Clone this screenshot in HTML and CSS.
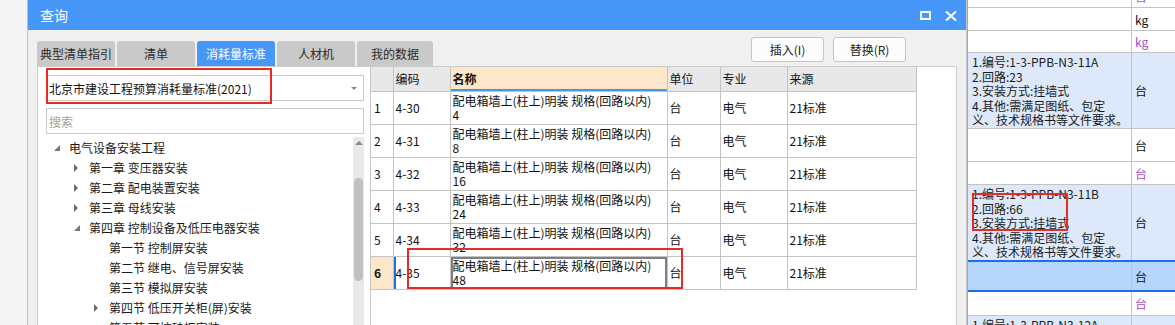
FILE: index.html
```html
<!DOCTYPE html>
<html lang="zh-CN">
<head>
<meta charset="utf-8">
<title>查询</title>
<link rel="stylesheet" href="styles.css">
</head>
<body>
<div class="screen">
  <div class="backdrop"></div>

  <div class="dialog">
    <div class="titlebar">
      <span class="title">查询</span>
      <div class="winbtns">
        <svg class="wbtn" width="11" height="9" viewBox="0 0 11 9"><rect x="1" y="1" width="9" height="7" fill="none" stroke="#fff" stroke-width="2"/></svg>
        <svg class="wbtn" width="12" height="10" viewBox="0 0 12 10"><path d="M1 0.5 L11 9.5 M11 0.5 L1 9.5" stroke="#fff" stroke-width="2" fill="none"/></svg>
      </div>
    </div>

    <div class="body">
      <div class="toolbar">
        <div class="tabs">
          <div class="tab">典型清单指引</div>
          <div class="tab">清单</div>
          <div class="tab active">消耗量标准</div>
          <div class="tab">人材机</div>
          <div class="tab narrow">我的数据</div>
        </div>
        <div class="actions">
          <div class="btn">插入(I)</div>
          <div class="btn">替换(R)</div>
        </div>
      </div>

      <div class="panel">
        <div class="leftpane">
          <div class="combo"><span>北京市建设工程预算消耗量标准(2021)</span><i class="caret"></i></div>
          <div class="search">搜索</div>
          <div class="treewrap">
            <div class="tree">
              <div class="node l0"><span class="tog"><i class="tri-open"></i></span>电气设备安装工程</div>
              <div class="node l1"><span class="tog"><i class="tri-closed"></i></span>第一章 变压器安装</div>
              <div class="node l1"><span class="tog"><i class="tri-closed"></i></span>第二章 配电装置安装</div>
              <div class="node l1"><span class="tog"><i class="tri-closed"></i></span>第三章 母线安装</div>
              <div class="node l1"><span class="tog"><i class="tri-open"></i></span>第四章 控制设备及低压电器安装</div>
              <div class="node l2"><span class="tog"></span>第一节 控制屏安装</div>
              <div class="node l2"><span class="tog"></span>第二节 继电、信号屏安装</div>
              <div class="node l2"><span class="tog"></span>第三节 模拟屏安装</div>
              <div class="node l2"><span class="tog"><i class="tri-closed"></i></span>第四节 低压开关柜(屏)安装</div>
              <div class="node l2"><span class="tog"></span>第五节 可控硅柜安装</div>
            </div>
            <div class="vscroll">
              <i class="up"></i>
              <div class="thumb"></div>
            </div>
          </div>
        </div>

        <div class="rightpane">
          <table class="grid-table">
            <colgroup>
              <col class="c-num"><col class="c-code"><col class="c-name"><col class="c-unit"><col class="c-major"><col class="c-src">
            </colgroup>
            <thead>
              <tr>
                <th></th><th>编码</th><th class="sorted">名称</th><th>单位</th><th>专业</th><th>来源</th>
              </tr>
            </thead>
            <tbody>
              <tr><td class="num">1</td><td>4-30</td><td class="name">配电箱墙上(柱上)明装 规格(回路以内)<br>4</td><td>台</td><td>电气</td><td>21标准</td></tr>
              <tr><td class="num">2</td><td>4-31</td><td class="name">配电箱墙上(柱上)明装 规格(回路以内)<br>8</td><td>台</td><td>电气</td><td>21标准</td></tr>
              <tr><td class="num">3</td><td>4-32</td><td class="name">配电箱墙上(柱上)明装 规格(回路以内)<br>16</td><td>台</td><td>电气</td><td>21标准</td></tr>
              <tr><td class="num">4</td><td>4-33</td><td class="name">配电箱墙上(柱上)明装 规格(回路以内)<br>24</td><td>台</td><td>电气</td><td>21标准</td></tr>
              <tr><td class="num">5</td><td>4-34</td><td class="name">配电箱墙上(柱上)明装 规格(回路以内)<br>32</td><td>台</td><td>电气</td><td>21标准</td></tr>
              <tr class="current"><td class="num">6</td><td class="code">4-35</td><td class="name focus">配电箱墙上(柱上)明装 规格(回路以内)<br>48</td><td>台</td><td>电气</td><td>21标准</td></tr>
            </tbody>
          </table>
        </div>
      </div>
    </div>
  </div>

  <div class="sheet">
    <div class="rows">
      <div class="row h23"><div class="c1"></div><div class="c2 purple">台</div></div>
      <div class="row h23"><div class="c1"></div><div class="c2">kg</div></div>
      <div class="row h22"><div class="c1"></div><div class="c2 purple">kg</div></div>
      <div class="row desc"><div class="c1">1.编号:1-3-PPB-N3-11A<br>2.回路:23<br>3.安装方式:挂墙式<br>4.其他:需满足图纸、包定<br>义、技术规格书等文件要求。</div><div class="c2">台</div></div>
      <div class="row h33"><div class="c1"></div><div class="c2">台</div></div>
      <div class="row h23"><div class="c1"></div><div class="c2 purple">台</div></div>
      <div class="row desc"><div class="c1">1.编号:1-3-PPB-N3-11B<br>2.回路:66<br>3.安装方式:挂墙式<br>4.其他:需满足图纸、包定<br>义、技术规格书等文件要求。</div><div class="c2">台</div></div>
      <div class="row selected"><div class="c1"></div><div class="c2">台</div></div>
      <div class="row h24"><div class="c1"></div><div class="c2 purple">台</div></div>
      <div class="row desc"><div class="c1">1.编号:1-3-PPB-N3-12A<br>2.回路:23</div><div class="c2">台</div></div>
    </div>
  </div>

  <div class="mark mark-combo"></div>
  <div class="mark mark-row"></div>
  <div class="mark mark-desc"></div>
</div>
</body>
</html>
```

FILE: styles.css
```css
* { box-sizing: border-box; }
html, body { margin: 0; padding: 0; }
body {
  width: 1175px;
  height: 325px;
  overflow: hidden;
  background: #f4f4f4;
  font-family: "Noto Sans CJK SC", "Microsoft YaHei", sans-serif;
  font-size: 12px;
  color: #1a1a1a;
}

.screen {
  position: relative;
  display: flex;
  height: 325px;
  overflow: hidden;
}

.backdrop {
  flex: none;
  width: 28px;
  background: #f4f4f4;
  border-right: 1px solid #c2c2c2;
}

/* ---------- dialog ---------- */
.dialog {
  flex: none;
  width: 939px;
  display: flex;
  flex-direction: column;
  background: #f0f0f0;
  border-right: 1px solid #c6c6c6;
}

.titlebar {
  height: 30px;
  flex: none;
  background: #4797f8;
  display: flex;
  align-items: center;
  justify-content: space-between;
  padding: 0 9px 0 12px;
}
.title {
  color: #fff;
  font-size: 14px;
}
.winbtns {
  display: flex;
  align-items: center;
  gap: 14px;
  padding-top: 1px;
}
.wbtn { display: block; }

.body {
  flex: 1;
  display: flex;
  flex-direction: column;
  padding: 0 9px;
}

.toolbar {
  height: 36px;
  flex: none;
  display: flex;
  justify-content: space-between;
}
.tabs {
  display: flex;
  align-items: flex-end;
  gap: 2px;
}
.tab {
  width: 78px;
  height: 25px;
  background: #c9c9c9;
  color: #2a2a2a;
  border-radius: 3px 3px 0 0;
  display: flex;
  align-items: center;
  justify-content: center;
  white-space: nowrap;
}
.tab.narrow { width: 76px; }
.tab.active {
  background: #4797f8;
  color: #fff;
}

.actions {
  display: flex;
  gap: 9px;
  padding-top: 7px;
  margin-right: 51px;
}
.btn {
  width: 73px;
  height: 25px;
  background: #fcfcfc;
  border: 1px solid #c4c4c4;
  border-radius: 3px;
  display: flex;
  align-items: center;
  justify-content: center;
  color: #222;
}

.panel {
  flex: 1;
  display: flex;
  background: #fff;
  border: 1px solid #cdcdcd;
  border-bottom: none;
}

/* ---------- left pane ---------- */
.leftpane {
  width: 333px;
  flex: none;
  border-right: 1px solid #c6c6c6;
  padding: 8px 6px 0 8px;
  display: flex;
  flex-direction: column;
}
.combo {
  height: 26px;
  border: 1px solid #cacaca;
  display: flex;
  align-items: center;
  justify-content: space-between;
  padding: 0 6px 0 2px;
  color: #111;
}
.caret {
  width: 0;
  height: 0;
  border-left: 3px solid transparent;
  border-right: 3px solid transparent;
  border-top: 3px solid #8a8a8a;
  margin-top: 1px;
}
.search {
  margin-top: 7px;
  height: 26px;
  border: 1px solid #cacaca;
  display: flex;
  align-items: center;
  padding-left: 2px;
  color: #a0a0a0;
}

.treewrap {
  margin-top: 3px;
  flex: 1;
  display: flex;
}
.tree {
  flex: 1;
  padding-top: 1px;
}
.node {
  height: 20px;
  line-height: 20px;
  display: flex;
  align-items: center;
  white-space: nowrap;
  color: #1a1a1a;
}
.node.l1 { padding-left: 20px; }
.node.l2 { padding-left: 40px; }
.tog {
  width: 23px;
  flex: none;
  height: 20px;
  display: flex;
  align-items: center;
  padding-left: 8px;
}
.tri-closed {
  width: 0;
  height: 0;
  border-top: 4px solid transparent;
  border-bottom: 4px solid transparent;
  border-left: 4px solid #6a6a6a;
}
.tri-open {
  width: 0;
  height: 0;
  border-left: 6px solid transparent;
  border-bottom: 6px solid #777;
}

.vscroll {
  width: 11px;
  flex: none;
  background: #e9e9e9;
  display: flex;
  flex-direction: column;
  align-items: center;
}
.vscroll .up {
  margin-top: 4px;
  width: 0;
  height: 0;
  border-left: 4px solid transparent;
  border-right: 4px solid transparent;
  border-bottom: 4px solid #8a8a8a;
}
.vscroll .thumb {
  margin-top: 33px;
  width: 9px;
  height: 103px;
  border-radius: 5px;
  background: #c1c1c1;
}

/* ---------- right pane / table ---------- */
.rightpane {
  flex: 1;
}
.grid-table {
  border-collapse: collapse;
  table-layout: fixed;
  width: 545px;
  font-size: 12px;
}
.c-num { width: 22px; }
.c-code { width: 57px; }
.c-name { width: 217px; }
.c-unit { width: 53px; }
.c-major { width: 67px; }
.c-src { width: 129px; }

.grid-table th,
.grid-table td {
  border: 1px solid #c4c4c4;
  text-align: left;
  vertical-align: middle;
  padding: 0 2px;
  white-space: nowrap;
  overflow: hidden;
}
.grid-table tr > :first-child { border-left: none; }
.grid-table thead tr > * { border-top: none; }
.grid-table th {
  height: 24px;
  background: #e8e8e8;
  font-weight: normal;
  color: #111;
}
.grid-table th.sorted {
  background: #fee7c9;
  font-weight: bold;
  box-shadow: inset 0 -2px 0 #4a93ea;
}
.grid-table td {
  height: 33px;
  line-height: 14px;
  color: #111;
}
.grid-table td.num { padding-left: 3px; }
.grid-table td.name { padding-top: 1px; }

.current td.num {
  background: #fee7c9;
  font-weight: bold;
}
.current td.code { box-shadow: inset 2px 0 0 #1f6fe8; }
.current td.focus { box-shadow: inset 0 0 0 2px #7f7f7f; }

/* ---------- background sheet ---------- */
.sheet {
  flex: 1;
  background: #fff;
  border-left: 1px solid #a9a9a9;
  overflow: hidden;
}
.rows { margin-top: -15px; }
.row {
  display: flex;
  border-bottom: 1px solid #c4c4c4;
}
.row .c1 {
  width: 164px;
  flex: none;
  border-right: 1px solid #c4c4c4;
  padding: 2px 0 0 4px;
  line-height: 14.6px;
  white-space: nowrap;
  color: #1a1a1a;
}
.row .c2 {
  flex: 1;
  display: flex;
  align-items: center;
  padding-left: 3px;
  color: #111;
}
.row .c2.purple { color: #a64fc6; }
.h22 { height: 22px; }
.h23 { height: 23px; }
.h24 { height: 24px; }
.h33 { height: 33px; }
.row.desc {
  height: 76px;
  background: #dde9fb;
}
.row.selected {
  height: 32px;
  background: #b5d5fb;
  border-top: 2px solid #1c6fe8;
  border-bottom: 2px solid #1c6fe8;
  margin-top: -1px;
}

/* ---------- annotation marks ---------- */
.mark {
  position: absolute;
  border: 2px solid #e62a26;
  pointer-events: none;
}
.mark-combo { left: 46px; top: 68px; width: 226px; height: 36px; }
.mark-row { left: 407px; top: 248px; width: 276px; height: 41px; }
.mark-desc { left: 972px; top: 193px; width: 96px; height: 38px; }
```
